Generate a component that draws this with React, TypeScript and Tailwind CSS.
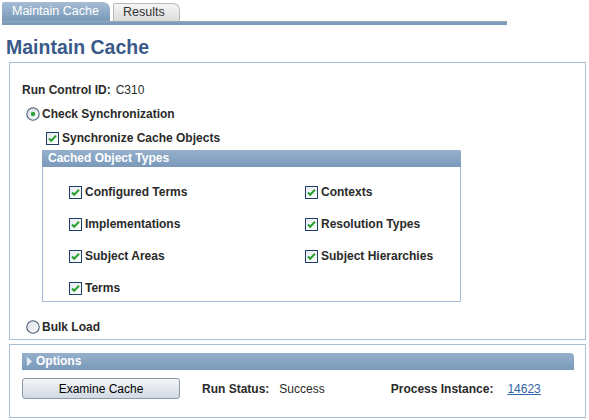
import React from 'react';

function CheckBox() {
  return (
    <svg width="13" height="13" viewBox="0 0 13 13" className="shrink-0">
      <defs>
        <linearGradient id="cbg" x1="0" y1="0" x2="1" y2="1">
          <stop offset="0" stopColor="#e6e9ee" />
          <stop offset="1" stopColor="#ffffff" />
        </linearGradient>
      </defs>
      <rect x="0.5" y="0.5" width="12" height="12" fill="url(#cbg)" stroke="#1f3f6b" />
      <path d="M3 6.5 L5.2 8.8 L10 3.6" fill="none" stroke="#22a02a" strokeWidth="2" />
    </svg>
  );
}

function Radio({ checked }: { checked?: boolean }) {
  return (
    <svg width="14" height="14" viewBox="0 0 14 14" className="shrink-0">
      <defs>
        <linearGradient id="rdg" x1="0" y1="0" x2="1" y2="1">
          <stop offset="0" stopColor="#d9dde3" />
          <stop offset="1" stopColor="#ffffff" />
        </linearGradient>
      </defs>
      <circle cx="7" cy="7" r="6.2" fill="url(#rdg)" stroke="#4a5f78" strokeWidth="1.1" />
      {checked && <circle cx="7" cy="7" r="2.2" fill="#2fa33a" />}
    </svg>
  );
}

const items = [
  ['Configured Terms', 'Contexts'],
  ['Implementations', 'Resolution Types'],
  ['Subject Areas', 'Subject Hierarchies'],
  ['Terms', ''],
];

export default function App() {
  return (
    <div className="w-[589px] h-[420px] bg-white text-[12px] text-[#2a2a2a] font-['Liberation_Sans',Arial,sans-serif] overflow-hidden">
      {/* Tabs */}
      <div className="flex items-end pl-[2px] pt-[2px] h-[21px]">
        <div className="w-[108px] h-[19px] rounded-tr-[7px] rounded-tl-[2px] bg-gradient-to-b from-[#a6bdd4] to-[#7899ba] text-white text-[12.5px] leading-[19px] pl-[10px]">
          Maintain Cache
        </div>
        <div className="ml-[3px] w-[67px] h-[18px] rounded-tr-[7px] rounded-tl-[2px] border border-b-0 border-[#b9b9b9] bg-gradient-to-b from-[#f5f5f5] to-[#dcdcdc] text-[#333] text-[12.5px] leading-[17px] pl-[9px]">
          Results
        </div>
      </div>
      <div className="ml-[2px] w-[505px] h-[4px] border-t border-[#9aa6b2] bg-[#7c9cbd]" />

      {/* Heading */}
      <h1 className="mt-[11px] ml-[6px] h-[22px] text-[19.5px] leading-[22px] font-bold text-[#3a5a8a]">
        Maintain Cache
      </h1>

      {/* Main box */}
      <div className="mt-[4px] ml-[9px] w-[577px] h-[278px] border border-[#a9bfd8] flex flex-col">
        <div className="mt-[19px] ml-[12px] h-[16px] flex items-center">
          <span className="font-bold">Run Control ID:</span>
          <span className="ml-[5px]">C310</span>
        </div>
        <div className="mt-[8px] ml-[16px] h-[16px] flex items-center gap-[2px]">
          <Radio checked />
          <span className="font-bold">Check Synchronization</span>
        </div>
        <div className="mt-[8px] ml-[36px] h-[16px] flex items-center gap-[3px]">
          <CheckBox />
          <span className="font-bold">Synchronize Cache Objects</span>
        </div>

        {/* Group box */}
        <div className="mt-[4px] ml-[32px] w-[419px] h-[152px] border-l border-r border-b border-[#a3bcda] flex flex-col">
          <div className="-mx-px h-[17px] rounded-tr-[3px] bg-gradient-to-b from-[#95b0cc] to-[#7a99b9] text-white font-bold leading-[17px] pl-[6px]">
            Cached Object Types
          </div>
          <div className="mt-[17px] grid grid-cols-[236px_1fr] gap-y-[16px] pl-[26px]">
            {items.flatMap(([a, b]) => [
              <div key={a} className="h-[16px] flex items-center gap-[3px]">
                <CheckBox />
                <span className="font-bold">{a}</span>
              </div>,
              <div key={a + '-r'} className="h-[16px] flex items-center gap-[3px]">
                {b && <CheckBox />}
                {b && <span className="font-bold">{b}</span>}
              </div>,
            ])}
          </div>
        </div>

        <div className="mt-[17px] ml-[16px] h-[16px] flex items-center gap-[2px]">
          <Radio />
          <span className="font-bold">Bulk Load</span>
        </div>
      </div>

      {/* Bottom box */}
      <div className="mt-[4px] ml-[9px] w-[577px] h-[74px] border border-[#a9bfd8] flex flex-col">
        <div className="mt-[8px] ml-[12px] w-[552px] h-[17px] rounded-tr-[4px] bg-gradient-to-b from-[#95b0cc] to-[#7a99b9] text-white font-bold leading-[17px] flex items-center">
          <svg width="12" height="17" viewBox="0 0 12 17" className="ml-[2px]">
            <path d="M3 4 L8 8.5 L3 13 Z" fill="#e8eef5" stroke="#c9d6e4" strokeWidth="0.5" />
          </svg>
          <span>Options</span>
        </div>
        <div className="mt-[8px] ml-[12px] flex items-center">
          <button className="w-[158px] h-[21px] rounded-[3px] border border-[#8e99a7] bg-gradient-to-b from-[#f4f6f9] to-[#d2d9e3] text-black text-[12px]">
            Examine Cache
          </button>
          <span className="ml-[22px] font-bold">Run Status:</span>
          <span className="ml-[10px]">Success</span>
          <span className="ml-[66px] font-bold">Process Instance:</span>
          <span className="ml-[14px] text-[#2f63a8] underline">14623</span>
        </div>
      </div>
    </div>
  );
}
